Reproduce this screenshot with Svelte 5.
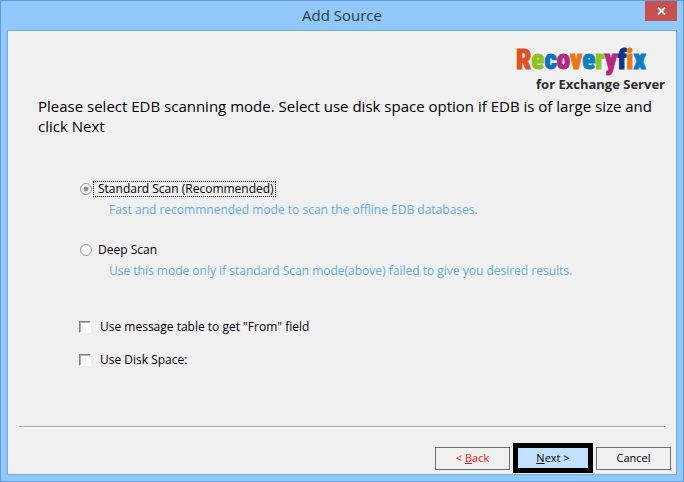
<script>
  const brand = [
    ['R', '#dd5126'], ['e', '#8fc31f'], ['c', '#0b72b9'], ['o', '#b5287e'],
    ['v', '#e87817'], ['e', '#0b7fc0'], ['r', '#8fc31f'], ['y', '#b5287e'],
    ['f', '#0a3290'], ['i', '#e87817'], ['x', '#0b7fc0']
  ];
  const modes = [
    { id: 'standard', label: 'Standard Scan (Recommended)', hint: 'Fast and recommnended mode to scan the offline EDB databases.' },
    { id: 'deep', label: 'Deep Scan', hint: 'Use this mode only if standard Scan mode(above) failed to give you desired results.' }
  ];
  let mode = $state('standard');
  let messageTable = $state(false);
  let diskSpace = $state(false);
</script>

<div class="window">
  <header>
    <h1>Add Source</h1>
    <button class="close" aria-label="Close">
      <svg width="9" height="8" viewBox="0 0 9 8"><path d="M1 0.5 8 7.5M8 0.5 1 7.5" stroke="#fff" stroke-width="1.8" /></svg>
    </button>
  </header>

  <main>
    <div class="brand">
      <div class="name">{#each brand as [letter, color]}<span style:color>{letter}</span>{/each}</div>
      <div class="product">for Exchange Server</div>
    </div>

    <p class="intro">Please select EDB scanning mode. Select use disk space option if EDB is of large size and click Next</p>

    <div class="modes" role="radiogroup" aria-label="Scanning mode">
      {#each modes as m}
        <div class="mode">
          <label>
            <input type="radio" name="mode" value={m.id} bind:group={mode} />
            <span class="caption" class:focused={mode === m.id}>{m.label}</span>
          </label>
          <p class="hint">{m.hint}</p>
        </div>
      {/each}
    </div>

    <div class="options">
      <label><input type="checkbox" bind:checked={messageTable} />Use message table to get "From" field</label>
      <label><input type="checkbox" bind:checked={diskSpace} />Use Disk Space:</label>
    </div>

    <footer>
      <hr />
      <div class="actions">
        <button class="back">&lt; <u>B</u>ack</button>
        <button class="next"><u>N</u>ext &gt;</button>
        <button>Cancel</button>
      </div>
    </footer>
  </main>
</div>

<style>
  .window {
    box-sizing: border-box;
    min-height: 100vh;
    display: flex;
    flex-direction: column;
    padding: 0 6px 6px;
    border: 1px solid #6399d4;
    background: #90c8fc;
    color: #000;
    font-family: "Open Sans", "Noto Sans", sans-serif;
    font-size: 12px;
    line-height: 16px;
  }
  header {
    display: grid;
    grid-template-columns: 32px 1fr 32px;
    height: 29px;
  }
  h1 {
    grid-column: 2;
    margin: 0;
    font-size: 15px;
    line-height: 29px;
    font-weight: 400;
    text-align: center;
    color: #303a44;
  }
  .close {
    display: flex;
    align-items: center;
    justify-content: center;
    height: 20px;
    min-width: 0;
    padding: 0;
    border: 0;
    background: #c75050;
  }
  main {
    flex: 1;
    display: flex;
    flex-direction: column;
    border: 1px solid #74a9dd;
    background: #f0f0f0;
  }
  .brand {
    align-self: flex-end;
    width: 149px;
    margin: 13px 11px 0 0;
  }
  .name {
    font: 900 27px/32px "Roboto Condensed", "Open Sans Condensed", "Liberation Sans Narrow", sans-serif;
    font-variant-ligatures: none;
    -webkit-text-stroke: 1px currentColor;
    white-space: nowrap;
  }
  .product {
    font-size: 13px;
    line-height: 16px;
    font-weight: 700;
    text-align: right;
    white-space: nowrap;
    color: #2b2b2b;
  }
  .intro {
    margin: 4px 24px 0 30px;
    font-size: 15px;
    line-height: 20px;
  }
  .modes {
    display: flex;
    flex-direction: column;
    gap: 24px;
    margin: 45px 24px 0 72px;
  }
  label {
    display: flex;
    align-items: center;
    width: max-content;
  }
  input {
    appearance: none;
    box-sizing: border-box;
    flex: none;
    width: 12px;
    height: 12px;
    margin: 0;
    background: #fff;
  }
  input[type="radio"] {
    border: 1px solid #999;
    border-radius: 50%;
  }
  input[type="radio"]:checked {
    background: radial-gradient(circle, #8c8c8c 2px, #fff 3px);
  }
  .caption {
    margin-left: 1px;
    padding: 0 1px 0 4px;
    line-height: 14px;
    border: 1px solid transparent;
  }
  .caption.focused {
    border: 1px dotted #000;
  }
  .hint {
    margin: 5px 0 0 29px;
    color: #5faee0;
  }
  .options {
    display: flex;
    flex-direction: column;
    gap: 17px;
    margin: 40px 24px 0 71px;
  }
  .options label {
    gap: 9px;
  }
  input[type="checkbox"] {
    border: 1px solid;
    border-color: #808080 #fff #fff #808080;
    box-shadow: inset 1px 1px #b0b0b0;
  }
  input[type="checkbox"]:checked {
    background: linear-gradient(#444, #444) center / 6px 6px no-repeat #fff;
  }
  footer {
    margin-top: auto;
    padding: 0 5px 0 11px;
  }
  hr {
    height: 1px;
    margin: 0 6px 16px 0;
    border: 0;
    background: #a0a0a0;
    box-shadow: 0 1px #fff;
  }
  .actions {
    display: flex;
    justify-content: flex-end;
    align-items: center;
    gap: 3px;
    margin-bottom: 1px;
  }
  button {
    min-width: 75px;
    height: 23px;
    padding: 0;
    border: 1px solid #6c6c6c;
    background: #f0f0f0;
    color: #000;
    font: 12px/16px "Open Sans", "Noto Sans", sans-serif;
  }
  .actions button {
    font-size: 11px;
  }
  .actions .back {
    color: #e81123;
  }
  .actions .next {
    width: 80px;
    height: 30px;
    border: 5px solid #000;
    background: #c2e1ff;
  }
</style>
